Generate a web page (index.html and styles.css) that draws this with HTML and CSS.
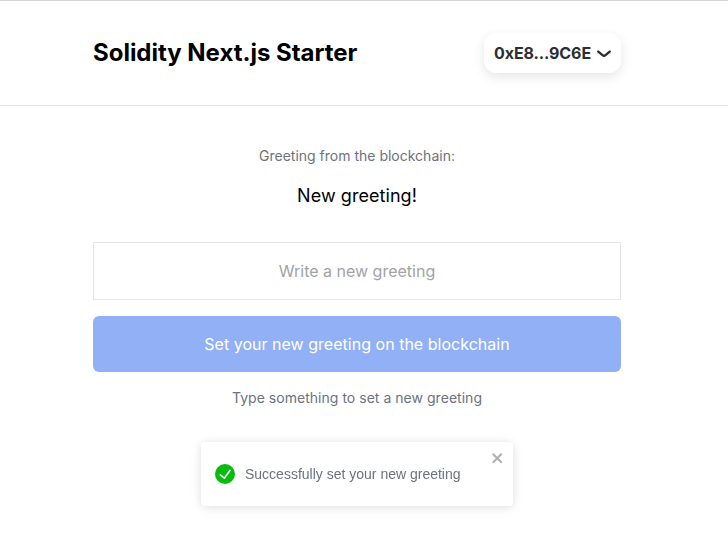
FILE: index.html
```html
<!DOCTYPE html>
<html lang="en">
<head>
  <meta charset="UTF-8">
  <title>Solidity Next.js Starter</title>
  <meta name="viewport" content="width=device-width,initial-scale=1">
  <link rel="stylesheet" href="styles.css">
</head>
<body>
  <header class="header">
    <div class="header-inner">
      <h1 class="title">Solidity Next.js Starter</h1>
      <button class="account" type="button">
        <span>0xE8...9C6E</span>
        <svg class="chevron" width="14" height="7" viewBox="0 0 14 7" fill="none">
          <path d="M12.75 1.54L8.513 5.166a2.333 2.333 0 0 1-3.026 0L1.25 1.54" stroke="currentColor" stroke-width="2.3" stroke-linecap="round" stroke-linejoin="round"/>
        </svg>
      </button>
    </div>
  </header>

  <main class="main">
    <p class="label">Greeting from the blockchain:</p>
    <p class="greeting">New greeting!</p>
    <form class="greeting-form">
      <input class="greeting-input" type="text" placeholder="Write a new greeting">
      <button class="submit" type="submit" disabled>Set your new greeting on the blockchain</button>
      <p class="hint">Type something to set a new greeting</p>
    </form>
  </main>

  <div class="toast" role="status">
    <svg class="toast-icon" width="20" height="20" viewBox="0 0 24 24">
      <path fill="#07bc0c" d="M12 0a12 12 0 1012 12A12.014 12.014 0 0012 0zm6.927 8.2l-6.845 9.289a1.011 1.011 0 01-1.43.188l-4.888-3.908a1 1 0 111.25-1.562l4.076 3.261 6.227-8.451a1 1 0 111.61 1.183z"/>
    </svg>
    <span class="toast-text">Successfully set your new greeting</span>
    <button class="toast-close" type="button" aria-label="close">
      <svg width="14" height="16" viewBox="0 0 14 16">
        <path fill="currentColor" fill-rule="evenodd" d="M7.71 8.23l3.75 3.75-1.48 1.48-3.75-3.75-3.75 3.75L1 11.98l3.75-3.75L1 4.48 2.48 3l3.75 3.75L9.98 3l1.48 1.48-3.75 3.75z"/>
      </svg>
    </button>
  </div>
</body>
</html>
```
FILE: styles.css
```css
* {
  box-sizing: border-box;
}
body {
  margin: 0;
  background: #fff;
  color: #000;
  font-family: Inter, "Liberation Sans", sans-serif;
}
p, h1 {
  margin: 0;
}
.header {
  height: 106px;
  border-top: 1px solid #d6d6d6;
  border-bottom: 1px solid #e5e7eb;
}
.header-inner {
  display: flex;
  align-items: center;
  justify-content: space-between;
  width: 528px;
  height: 104px;
  margin-left: 93px;
}
.title {
  font-size: 24px;
  line-height: 32px;
  font-weight: 700;
  letter-spacing: -0.02px;
}
.account {
  display: flex;
  align-items: center;
  gap: 6px;
  height: 40px;
  padding: 0 10px;
  border: none;
  border-radius: 12px;
  background: #fff;
  box-shadow: 0 4px 12px rgba(0, 0, 0, 0.1);
  color: #2b2f34;
  font-family: inherit;
  font-size: 16px;
  font-weight: 700;
  letter-spacing: -0.1px;
}
.main {
  width: 528px;
  margin-left: 93px;
  padding-top: 40px;
  text-align: center;
}
.label, .hint {
  color: #6b7280;
  font-size: 14px;
  line-height: 20px;
}
.hint {
  letter-spacing: 0.03px;
}
.greeting {
  margin-top: 16px;
  font-size: 18px;
  line-height: 28px;
  letter-spacing: 0.06px;
}
.greeting-form {
  display: flex;
  flex-direction: column;
  gap: 16px;
  margin-top: 32px;
}
.greeting-input {
  height: 58px;
  border: 1px solid #e5e7eb;
  border-radius: 0;
  text-align: center;
  font-family: inherit;
  font-size: 16px;
}
.greeting-input::placeholder {
  color: #a1a3a7;
}
.submit {
  height: 56px;
  border: none;
  border-radius: 6px;
  background: #92b0f5;
  color: #fff;
  font-family: inherit;
  font-size: 16px;
  letter-spacing: 0.02px;
}
.toast {
  position: fixed;
  left: 201px;
  bottom: 36px;
  display: flex;
  align-items: center;
  width: 312px;
  height: 64px;
  padding: 0 14px;
  border-radius: 4px;
  background: #fff;
  box-shadow: 0 1px 10px rgba(0, 0, 0, 0.1), 0 2px 15px rgba(0, 0, 0, 0.05);
}
.toast-icon {
  margin-right: 10px;
}
.toast-text {
  color: #6b7280;
  font-family: "Liberation Sans", Arial, sans-serif;
  font-size: 14px;
}
.toast-close {
  position: absolute;
  top: 8px;
  right: 8px;
  padding: 0;
  border: none;
  background: none;
  color: #000;
  opacity: 0.3;
  line-height: 0;
}
```
